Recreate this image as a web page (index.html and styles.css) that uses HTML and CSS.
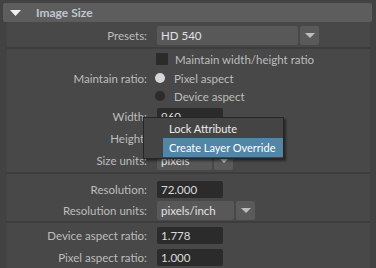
FILE: index.html
```html
<!DOCTYPE html>
<html lang="en">
<head>
  <meta charset="UTF-8" />
  <title>Image Size</title>
  <link rel="stylesheet" href="styles.css">
</head>
<body>
  <div class="header">
    <svg class="fold" width="11" height="6" viewBox="0 0 11 6"><polygon points="0,0 11,0 5.5,6" fill="#f2f2f2"/></svg>
    <span class="title">Image Size</span>
  </div>

  <div class="panel">
    <div class="row presets">
      <span class="lbl">Presets:</span>
      <div class="ctl">
        <div class="combo presets-combo">HD 540</div>
        <div class="combo-btn"><svg width="10" height="5" viewBox="0 0 10 5"><polygon points="0,0 10,0 5,5" fill="#bdbdbd"/></svg></div>
      </div>
    </div>
    <div class="sep"></div>

    <div class="row check-row">
      <span class="lbl"></span>
      <div class="ctl">
        <span class="checkbox"></span>
        <span class="opt">Maintain width/height ratio</span>
      </div>
    </div>
    <div class="row radio-row">
      <span class="lbl">Maintain ratio:</span>
      <div class="ctl">
        <span class="radio on"></span>
        <span class="opt">Pixel aspect</span>
      </div>
    </div>
    <div class="row radio-row">
      <span class="lbl"></span>
      <div class="ctl">
        <span class="radio"></span>
        <span class="opt">Device aspect</span>
      </div>
    </div>
    <div class="row">
      <span class="lbl">Width:</span>
      <div class="ctl"><div class="field">960</div></div>
    </div>
    <div class="row">
      <span class="lbl">Height:</span>
      <div class="ctl"><div class="field">540</div></div>
    </div>
    <div class="row">
      <span class="lbl">Size units:</span>
      <div class="ctl">
        <div class="combo units-combo">pixels</div>
        <div class="combo-btn"><svg width="10" height="5" viewBox="0 0 10 5"><polygon points="0,0 10,0 5,5" fill="#bdbdbd"/></svg></div>
      </div>
    </div>
    <div class="sep"></div>

    <div class="row res-row">
      <span class="lbl">Resolution:</span>
      <div class="ctl"><div class="field">72.000</div></div>
    </div>
    <div class="row res-units">
      <span class="lbl">Resolution units:</span>
      <div class="ctl">
        <div class="combo res-combo">pixels/inch</div>
        <div class="combo-btn"><svg width="10" height="5" viewBox="0 0 10 5"><polygon points="0,0 10,0 5,5" fill="#bdbdbd"/></svg></div>
      </div>
    </div>
    <div class="sep"></div>

    <div class="row aspect-row">
      <span class="lbl">Device aspect ratio:</span>
      <div class="ctl"><div class="field">1.778</div></div>
    </div>
    <div class="row">
      <span class="lbl">Pixel aspect ratio:</span>
      <div class="ctl"><div class="field">1.000</div></div>
    </div>
  </div>

  <div class="menu">
    <div class="menu-item">Lock Attribute</div>
    <div class="menu-item active">Create Layer Override</div>
  </div>
</body>
</html>
```

FILE: styles.css
```css
body {
  margin: 0;
  height: 268px;
  overflow: hidden;
  background-color: #424242;
  font-family: "Lato", "Liberation Sans", sans-serif;
  font-size: 11.5px;
  color: #bdbdbd;
  position: relative;
}

.header {
  margin: 3px 4px 0 3px;
  height: 19px;
  background-color: #5d5d5d;
  border-radius: 2px;
  display: flex;
  align-items: center;
}

.fold {
  margin-left: 7px;
}

.title {
  margin-left: 15px;
  font-size: 12px;
  font-weight: bold;
  color: #bfc8d2;
}

.panel {
  margin: 0 6px 0 7px;
  padding-top: 2px;
  height: 246px;
  background-color: #484848;
}

.row {
  display: grid;
  grid-template-columns: 140px 1fr;
  column-gap: 10px;
  align-items: center;
  height: 22px;
}

.lbl {
  text-align: right;
  white-space: nowrap;
}

.ctl {
  display: flex;
  align-items: center;
  gap: 2px;
}

.check-row {
  height: 20px;
}

.radio-row {
  height: 18px;
}

.res-row {
  margin-top: 4px;
}

.res-units {
  height: 20px;
}

.aspect-row {
  margin-top: 1px;
}

.sep {
  height: 2px;
  margin-top: 1px;
  background-color: #3d3d3d;
}

.combo {
  height: 19px;
  line-height: 19px;
  padding-left: 4px;
  background-color: #585858;
  border-radius: 2px;
  color: #e2e2e2;
  box-sizing: border-box;
}

.presets-combo {
  width: 141px;
}

.units-combo {
  width: 55px;
}

.res-combo {
  width: 77px;
}

.combo-btn {
  width: 19px;
  height: 19px;
  background-color: #5a5a5a;
  border-radius: 2px;
  display: flex;
  align-items: center;
  justify-content: center;
}

.field {
  width: 66px;
  height: 17px;
  line-height: 17px;
  padding-left: 4px;
  box-sizing: border-box;
  background-color: #2b2b2b;
  border-radius: 2px;
  color: #dcdcdc;
}

.checkbox {
  width: 12px;
  height: 12px;
  margin-left: -1px;
  background-color: #2b2b2b;
  border-radius: 1px;
}

.radio {
  width: 10px;
  height: 10px;
  margin-left: -2px;
  border-radius: 50%;
  background-color: #2b2b2b;
}

.radio.on {
  background-color: #d6d6d6;
}

.opt {
  margin-left: 5px;
}

.radio + .opt {
  margin-left: 7px;
}

.menu {
  position: absolute;
  left: 143px;
  top: 117px;
  width: 139px;
  padding: 1px 0;
  background-color: #444;
  border: 1px solid #262626;
  box-shadow: 2px 2px 2px rgba(0, 0, 0, 0.45);
  color: #ececec;
  font-size: 11px;
}

.menu-item {
  margin-left: 19px;
  height: 19px;
  line-height: 19px;
  padding-left: 6px;
  white-space: nowrap;
}

.menu-item.active {
  background-color: #5285a6;
  color: #fff;
}
```
